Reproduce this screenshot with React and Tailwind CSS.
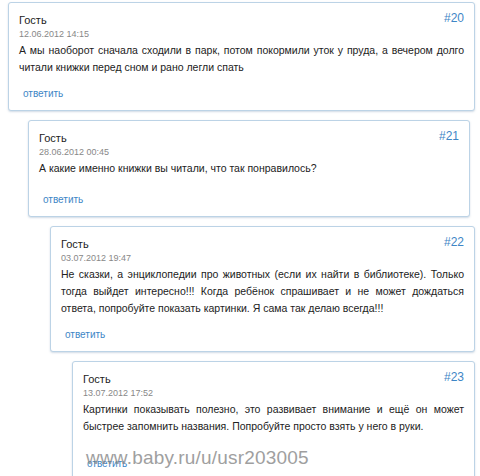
const comments = [
  {
    n: 20,
    date: "12.06.2012 14:15",
    text: "А мы наоборот сначала сходили в парк, потом покормили уток у пруда, а вечером долго читали книжки перед сном и рано легли спать",
    indent: "ml-[8px] mr-[5px]",
    minH: "min-h-[108px]",
  },
  {
    n: 21,
    date: "28.06.2012 00:45",
    text: "А какие именно книжки вы читали, что так понравилось?",
    indent: "ml-[28px] mr-[10px]",
    minH: "min-h-[97px]",
  },
  {
    n: 22,
    date: "03.07.2012 19:47",
    text: "Не сказки, а энциклопедии про животных (если их найти в библиотеке). Только тогда выйдет интересно!!! Когда ребёнок спрашивает и не может дождаться ответа, попробуйте показать картинки. Я сама так делаю всегда!!!",
    indent: "ml-[50px] mr-[5px]",
    minH: "min-h-[124px]",
  },
  {
    n: 23,
    date: "13.07.2012 17:52",
    text: "Картинки показывать полезно, это развивает внимание и ещё он может быстрее запомнить названия. Попробуйте просто взять у него в руки.",
    indent: "ml-[72px] mr-[5px]",
    minH: "min-h-[120px]",
  },
];

function Comment({ c }) {
  return (
    <div
      className={`${c.indent} ${c.minH} relative rounded-[3px] border border-[#bcd3e6] bg-white px-[10px] pt-[10px] pb-[10px] shadow-[0_1px_2px_rgba(120,150,180,0.35)] flex flex-col`}
    >
      <div className="flex items-start justify-between">
        <div className="text-[11px] leading-[14px] text-[#222]">Гость</div>
        <div className="text-[12px] leading-[14px] text-[#3e86c6] -mt-[2px]">#{c.n}</div>
      </div>
      <div className="text-[9px] leading-[12px] text-[#888] mt-[1px]">{c.date}</div>
      <div className="text-[10.5px] leading-[17px] text-[#222] mt-[2px] text-justify">{c.text}</div>
      <div className="mt-auto pt-[12px] pl-[4px] text-[10px] leading-[12px] text-[#3e86c6]">ответить</div>
    </div>
  );
}

export default function App() {
  return (
    <div className="relative w-[480px] h-[476px] overflow-hidden bg-white pt-[2px] font-['Liberation_Sans',Arial,sans-serif]">
      <div className="flex flex-col gap-[9px]">
        {comments.map((c) => (
          <Comment key={c.n} c={c} />
        ))}
      </div>
      <div className="absolute left-[86px] bottom-[8px] text-[19px] leading-[20px] text-[#888] opacity-80 tracking-[0.2px]">
        www.baby.ru/u/usr203005
      </div>
    </div>
  );
}
